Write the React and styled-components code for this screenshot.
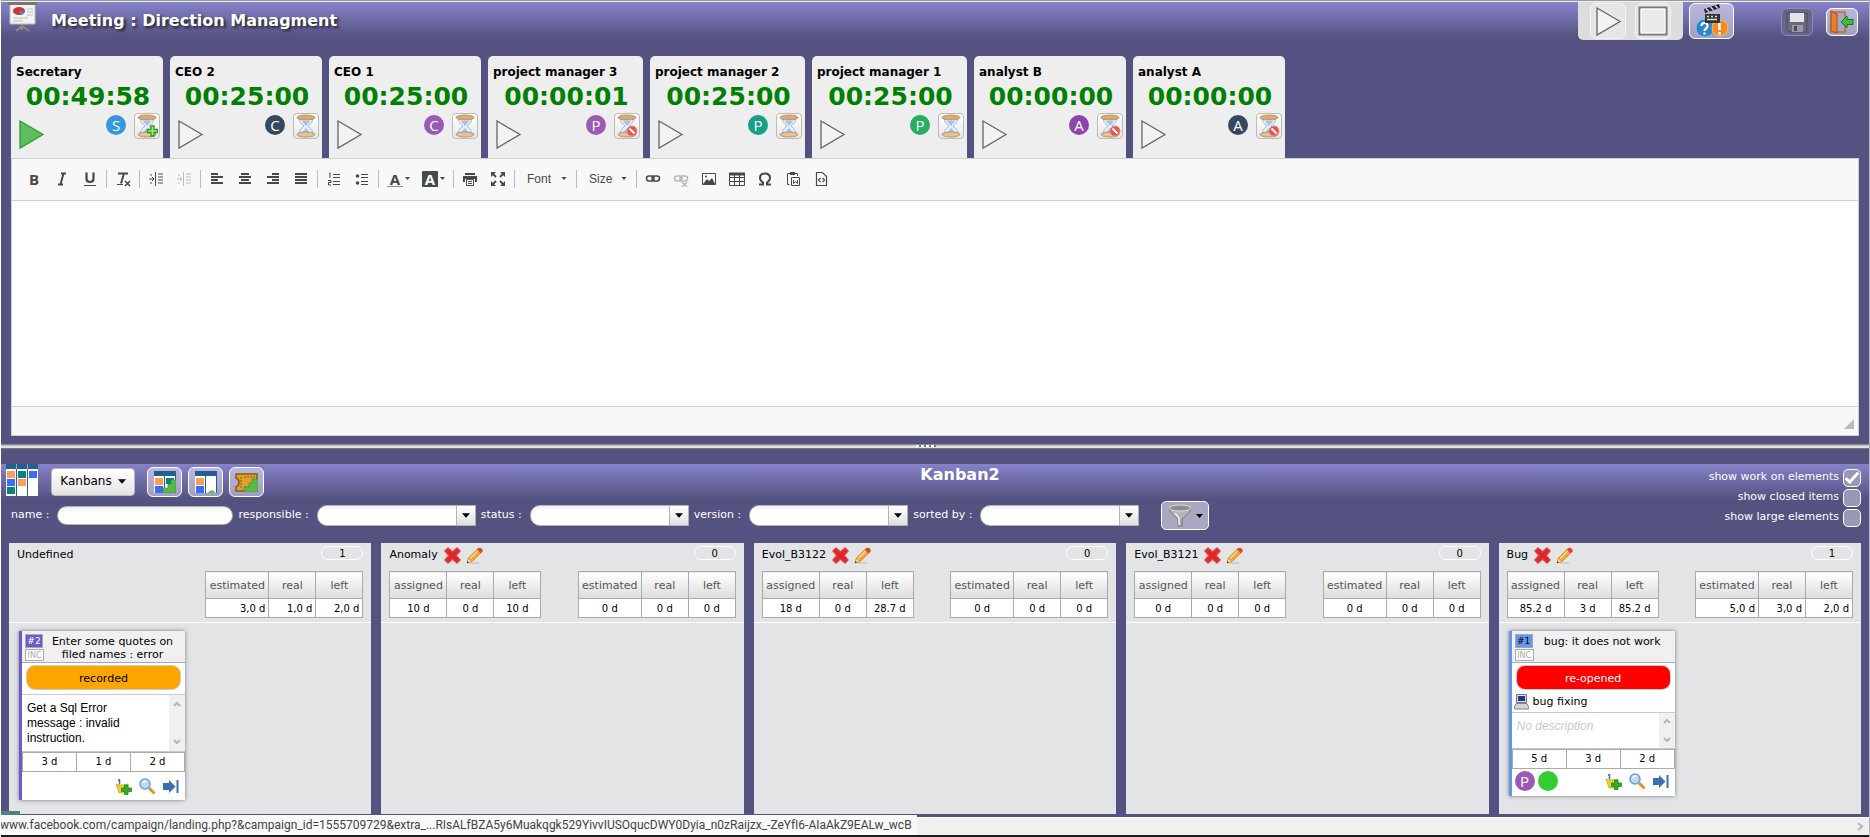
import React from "react";
import styled, { createGlobalStyle } from "styled-components";

const Global = createGlobalStyle`
  *, *::before, *::after { box-sizing: border-box; }
  body { margin: 0; background: #54517f; font: 11px/14px "DejaVu Sans", Verdana, sans-serif; color: #000; }
  button, input, select, textarea { font: inherit; color: inherit; margin: 0; padding: 0; }
  button { cursor: pointer; }
  svg { display: block; flex: none; }
`;

const Page = styled.div`
  position: relative;
  display: flex;
  flex-direction: column;
  min-height: 100vh;
  background: #545280;
  border-left: 1px solid #fff;
  border-right: 1px solid #b5b5bd;
  overflow: hidden;
`;

/* ---------- meeting header ---------- */
const MeetingPanel = styled.section`
  border-top: 1px solid #9a9a9a;
  box-shadow: inset 0 1px #f0f0f0;
  padding: 1px 10px 8px;
`;
const MeetingHeader = styled.header`
  display: flex;
  align-items: flex-start;
  height: 54px;
  margin: 0 -10px;
  padding: 0 11px 0 7px;
  background: linear-gradient(#8682ca, #545280 36px);
`;
const MeetingTitle = styled.h1`
  margin: 9px auto 0 14px;
  font-size: 16px;
  line-height: 20px;
  color: #fff;
  text-shadow: 2px 2px 3px #222;
`;
const PlayGroup = styled.div`
  display: flex;
  gap: 9px;
  width: 105px;
  height: 38px;
  padding: 1px 12px;
  margin-right: 6px;
  background: #ddd;
  border-radius: 0 0 5px 5px;
`;
const MediaButton = styled.button`
  display: grid;
  place-items: center;
  width: 36px;
  height: 36px;
  border: 1px solid #f2f2f2;
  border-radius: 6px;
  background: #e6e6e6;
`;
const HeaderButton = styled.button`
  display: grid;
  place-items: center;
  width: ${(p) => p.$w}px;
  height: ${(p) => p.$h}px;
  margin: ${(p) => p.$margin || "0"};
  border: 1px solid ${(p) => (p.$dim ? "#908eae" : "#fff")};
  border-radius: 6px;
  background: ${(p) => (p.$dim ? "#67658e" : "linear-gradient(#bbb8e0, #a19fc0)")};
`;

/* ---------- attendees ---------- */
const Attendees = styled.div`
  display: flex;
  gap: 7px;
`;
const Attendee = styled.article`
  width: ${(p) => (p.$wide ? 155 : 152)}px;
  height: 102px;
  padding: 8px 3px 0 5px;
  background: #eee;
  border-radius: 5px 5px 0 0;
`;
const AttendeeName = styled.h2`
  margin: 0;
  font-size: 12px;
  line-height: 16px;
  white-space: nowrap;
`;
const Clock = styled.div`
  padding-top: 1px;
  font-size: 25px;
  line-height: 32px;
  font-weight: bold;
  text-align: center;
  color: #008000;
`;
const AttendeeTools = styled.div`
  display: flex;
  align-items: flex-start;
  gap: 8px;
  padding-left: 2px;
`;
const PlainButton = styled.button`
  display: block;
  border: 0;
  background: none;
  margin: ${(p) => p.$margin || "0"};
`;
const Avatar = styled.span`
  display: grid;
  place-items: center;
  width: 20px;
  height: 20px;
  margin-top: 2px;
  border-radius: 50%;
  background: ${(p) => p.$color};
  color: #fff;
  font: 15px/20px "Open Sans", sans-serif;
`;
const HourglassButton = styled.button`
  display: grid;
  place-items: center;
  width: 26px;
  height: 26px;
  border: 1px solid #bbb;
  border-radius: 4px;
  background: linear-gradient(#fff, #e8e8e8);
`;

/* ---------- editor ---------- */
const Editor = styled.div`
  border: 1px solid #d1d1d1;
  background: #f8f8f8;
`;
const EditorToolbar = styled.div`
  display: flex;
  align-items: center;
  height: 42px;
  padding: 0 8px 2px;
  border-bottom: 1px solid #d1d1d1;
  color: #484848;
`;
const ToolButton = styled.button`
  display: flex;
  align-items: center;
  gap: 2px;
  height: 28px;
  padding: 0 6px;
  border: 0;
  background: none;
  opacity: ${(p) => (p.disabled ? 0.35 : 1)};
`;
const ToolGlyph = styled.span`
  width: 16px;
  height: 16px;
  border-bottom: ${(p) => (p.$bar ? "1px solid #888" : "0")};
  border-radius: ${(p) => (p.$filled ? 1 : 0)}px;
  background: ${(p) => (p.$filled ? "#484848" : "none")};
  color: ${(p) => (p.$filled ? "#fff" : "inherit")};
  font: bold 15px/16px "Open Sans", sans-serif;
  text-align: center;
`;
const ToolSeparator = styled.span`
  width: 1px;
  height: 18px;
  margin: 0 2px;
  background: #bcbcbc;
`;
const ToolCombo = styled.button`
  display: flex;
  align-items: center;
  justify-content: space-between;
  width: ${(p) => p.$w}px;
  height: 28px;
  padding: 0 7px 0 10px;
  border: 0;
  background: none;
  font: 12px/16px "Liberation Sans", Arial, sans-serif;
`;
const EditorText = styled.textarea`
  display: block;
  width: 100%;
  height: 205px;
  border: 0;
  outline: 0;
  padding: 20px;
  resize: none;
  background: #fff;
`;
const EditorFooter = styled.div`
  display: flex;
  align-items: flex-end;
  justify-content: flex-end;
  height: 29px;
  padding: 0 4px 6px;
  border-top: 1px solid #d1d1d1;
`;

const Splitter = styled.div`
  display: flex;
  justify-content: center;
  align-items: flex-start;
  height: 5px;
  padding: 1px 18px 0 0;
  background: linear-gradient(#8e8e8e 0 1px, #bbb 1px 2px, #e2e2e2 2px 4px, #777 4px);
`;
const Grip = styled.span`
  width: 20px;
  height: 2px;
  background: repeating-linear-gradient(90deg, #fff 0 3px, #777 3px 5px);
`;

/* ---------- kanban header ---------- */
const Kanban = styled.section`
  flex: 1;
  display: flex;
  flex-direction: column;
  padding-top: 15px;
`;
const KanbanHeader = styled.header`
  display: grid;
  grid-template-columns: 50px 1fr;
  grid-template-rows: 35px 44px;
  background: linear-gradient(#8682ca, #545280 35px);
`;
const KanbanIcon = styled.div`
  padding-left: 5px;
`;
const KanbanTools = styled.div`
  grid-area: 1 / 2;
  display: flex;
  align-items: flex-start;
  padding-top: 3px;
  gap: 6px;
`;
const KanbanMenu = styled.button`
  display: flex;
  align-items: center;
  justify-content: center;
  gap: 6px;
  width: 84px;
  height: 28px;
  margin: 1px 6px 0 0;
  padding-bottom: 2px;
  border: 1px solid #bbb;
  border-radius: 4px;
  background: linear-gradient(#fff, #e3e3e3);
  font-size: 12px;
`;
const KanbanTitle = styled.h2`
  grid-area: 1 / 2;
  justify-self: center;
  margin: 0;
  font-size: 16px;
  line-height: 22px;
  color: #fff;
`;
const Options = styled.div`
  grid-area: 1 / 2 / 3 / 3;
  justify-self: end;
  display: flex;
  flex-direction: column;
  align-items: flex-end;
  gap: 2px;
  padding: 5px 8px 0 0;
  color: #fff;
`;
const Option = styled.label`
  display: flex;
  gap: 4px;
  line-height: 16px;
`;
const Check = styled.input`
  appearance: none;
  width: 18px;
  height: 18px;
  border: 1px solid #fff;
  border-radius: 5px;
  background: #9997b6;
  display: grid;
  place-items: center;
  &:checked::before {
    content: "";
    width: 14px;
    height: 7px;
    border: solid #fff;
    border-width: 0 0 3px 3px;
    transform: translateY(-2px) rotate(-48deg);
  }
`;
const Filters = styled.form`
  grid-area: 2 / 1 / 3 / 3;
  display: flex;
  align-items: flex-start;
  gap: 5px;
  padding: 2px 10px 0;
  color: #fff;
`;
const Field = styled.label`
  display: flex;
  gap: 8px;
  padding-top: 4px;
  line-height: 20px;
  white-space: nowrap;
`;
const NameInput = styled.input`
  width: 176px;
  height: 19px;
  margin-top: 1px;
  padding: 0 8px;
  border: 1px solid #b3b3b3;
  border-radius: 10px;
  background: linear-gradient(#f0f0f0, #fff 6px);
  color: #000;
`;
const ComboBox = styled.span`
  position: relative;
  display: block;
  width: 159px;
  height: 21px;
`;
const ComboSelect = styled.select`
  appearance: none;
  width: 100%;
  height: 100%;
  padding: 0 24px 0 10px;
  border: 1px solid #b3b3b3;
  border-radius: 10px 0 0 10px;
  background: linear-gradient(#f0f0f0, #fff 6px);
  color: #000;
`;
const ComboArrow = styled.span`
  position: absolute;
  top: 1px;
  right: 1px;
  bottom: 1px;
  display: grid;
  place-items: center;
  width: 19px;
  border-left: 1px solid #b3b3b3;
  background: linear-gradient(#fff, #e0e0e0);
  color: #000;
  pointer-events: none;
`;
const FilterButton = styled.button`
  display: flex;
  align-items: center;
  justify-content: center;
  gap: 4px;
  width: 48px;
  height: 29px;
  margin-left: 17px;
  border: 1px solid #fff;
  border-radius: 5px;
  background: #a9a7c2;
  color: #000;
`;

/* ---------- board ---------- */
const Board = styled.div`
  flex: 1;
  display: grid;
  grid-template-columns: repeat(5, 1fr);
  gap: 10px;
  padding: 0 8px 3px;
`;
const Column = styled.section`
  background: #e3e4e6;
`;
const ColumnHead = styled.header`
  height: 80px;
  padding: 3px 8px 0;
  border-bottom: 1px solid #fff;
`;
const ColumnTitleRow = styled.div`
  display: flex;
  align-items: flex-start;
  height: 25px;
`;
const ColumnTitle = styled.h3`
  margin: 0 6px 0 0;
  font-size: 11px;
  line-height: 18px;
  font-weight: normal;
`;
const Count = styled.span`
  width: 42px;
  height: 14px;
  margin-left: auto;
  border: 1px solid #fff;
  border-radius: 8px;
  font-size: 10px;
  line-height: 13px;
  text-align: center;
`;
const Tables = styled.div`
  display: flex;
  justify-content: ${(p) => (p.$single ? "flex-end" : "space-between")};
`;
const LoadTable = styled.table`
  border-collapse: collapse;
  table-layout: fixed;
  width: ${(p) => p.$first + 95}px;
  th, td { border: 1px solid #aaa; width: 47px; padding: 0; }
  th:first-child { width: ${(p) => p.$first}px; }
  th {
    height: 27px;
    padding-top: 2px;
    font-weight: normal;
    color: #555;
    background: linear-gradient(#fff, #dcdcdc);
  }
  td {
    height: 19px;
    padding: 1px ${(p) => (p.$right ? 3 : 0)}px 0 0;
    background: #fff;
    font-size: 10px;
    line-height: 14px;
    text-align: ${(p) => (p.$right ? "right" : "center")};
  }
`;

/* ---------- card ---------- */
const Card = styled.article`
  width: 166px;
  margin: 8px 0 0 10px;
  background: #fff;
  border-left: 3px solid ${(p) => p.$color};
  box-shadow: 0 0 4px #777;
`;
const CardHead = styled.header`
  display: flex;
  gap: 2px;
  height: 32px;
  padding: 3px 6px 0 3px;
  background: #f0f0f0;
  border-bottom: 1px solid #aaa;
`;
const Tags = styled.div`
  display: flex;
  flex-direction: column;
  align-items: flex-start;
  gap: 1px;
`;
const IdTag = styled.span`
  width: 18px;
  height: 14px;
  border: 1px solid #aaa;
  background: ${(p) => p.$color};
  color: ${(p) => p.$text};
  font-size: 9px;
  line-height: 13px;
  text-align: center;
`;
const TypeTag = styled.span`
  width: 19px;
  height: 12px;
  border: 1px solid #aaa;
  background: #fff;
  color: #aaa;
  font-size: 8px;
  line-height: 11px;
  text-align: center;
`;
const CardTitle = styled.h4`
  flex: 1;
  margin: 0;
  padding-top: 1px;
  font-size: 11px;
  line-height: 13px;
  font-weight: normal;
  text-align: center;
`;
const Status = styled.div`
  height: 25px;
  margin: 2px 4px 4px;
  border: 1px solid #ccc;
  border-radius: 9px;
  background: ${(p) => p.$bg};
  color: ${(p) => p.$fg};
  line-height: 25px;
  text-align: center;
`;
const Activity = styled.div`
  display: flex;
  gap: 4px;
  padding: 0 2px;
  height: 18px;
  line-height: 15px;
`;
const Description = styled.div`
  display: flex;
  justify-content: space-between;
  height: ${(p) => p.$h}px;
  border: solid #c8c6d8;
  border-width: 1px 0;
  font: 12px/15px "Liberation Sans", Arial, sans-serif;
`;
const DescriptionText = styled.p`
  margin: 0;
  padding: 6px 16px 0 5px;
  color: ${(p) => (p.$empty ? "#c8c8d4" : "#000")};
  font-style: ${(p) => (p.$empty ? "italic" : "normal")};
`;
const ScrollTrack = styled.span`
  flex: none;
  display: flex;
  flex-direction: column;
  justify-content: space-between;
  align-items: center;
  width: 16px;
  padding: ${(p) => p.$pad}px 0;
  background: #f0f0f0;
`;
const WorkTable = styled.table`
  width: 100%;
  table-layout: fixed;
  border-collapse: collapse;
  td { height: 19px; padding: 0; border: 1px solid #aaa; font-size: 10px; line-height: 14px; text-align: center; }
`;
const CardFoot = styled.footer`
  display: flex;
  align-items: flex-start;
  gap: 3px;
  height: ${(p) => (p.$people ? 27 : 28)}px;
  padding: ${(p) => (p.$people ? 0 : 5)}px 6px 0 3px;
`;
const CardActions = styled.div`
  display: flex;
  gap: 7px;
  margin: ${(p) => (p.$people ? 4 : 1)}px 0 0 auto;
`;

/* ---------- browser bottom ---------- */
const HorizontalScroll = styled.div`
  display: flex;
  align-items: center;
  justify-content: flex-end;
  height: 20px;
  padding: 0 5px;
  background: #f0f0f0;
  border-top: 1px solid #fff;
  border-bottom: 2px solid #1c1c1c;
`;
const LinkPreview = styled.div`
  position: absolute;
  left: -1px;
  bottom: 2px;
  padding-right: 5px;
  height: 20px;
  background: #f9f9f9;
  color: #444;
  font: 12px/21px Roboto, "Open Sans", sans-serif;
  white-space: nowrap;
`;
const LoadMark = styled.span`
  position: absolute;
  left: -1px;
  bottom: 22px;
  width: 20px;
  height: 4px;
  background: #4f8088;
`;

/* ---------- drawings ---------- */
const Caret = ({ w = 7, h = 4 }) => (
  <svg width={w} height={h} viewBox="0 0 7 4"><path d="M0 0h7L3.500 4z" fill="currentColor" /></svg>
);
const PlayIcon = ({ on }) => (
  <svg width="27" height="31" viewBox="0 0 27 31">
    <path d="M2 2L25 15.500 2 29z" fill={on ? "#5cbf5c" : "#f3f3f1"} stroke={on ? "#2f9a35" : "#666"} strokeWidth="1.300" />
  </svg>
);
const StopIcon = () => (
  <svg width="30" height="30" viewBox="0 0 30 30">
    <path d="M1.500 1.500h27v27h-27z" fill="#e9ebe8" stroke="#777a76" strokeWidth="2" />
    <path d="M3 3h24v24H3z" fill="none" stroke="#fff" />
  </svg>
);
const BoardStandIcon = () => (
  <svg width="29" height="31" viewBox="0 0 29 31">
    <path d="M14 21v3l-6 5M14 24l7 5M14 24v4" stroke="#8b8b78" strokeWidth="2" fill="none" />
    <path d="M2 2h25v20H2z" fill="#f4f4f4" stroke="#bbb" />
    <rect width="29" height="3" rx="1" fill="#77776b" />
    <ellipse cx="11" cy="9" rx="6" ry="4" fill="#d8302c" />
    <path d="M11 9h6q-1 4-5 4z" fill="#5480c0" />
    <path d="M19 7h6M19 10h6M19 13h6M5 16h15M5 19h10" stroke="#bbb" />
  </svg>
);
const ClapIcon = () => (
  <svg width="34" height="34" viewBox="0 0 34 34">
    <circle cx="10" cy="24" r="9" fill="#2c86c9" stroke="#7fb9e6" />
    <circle cx="25" cy="24" r="8" fill="#f58a1f" stroke="#fbb871" />
    <path d="M6.500 22q0-3 3-3t3 3q0 1.500-1.500 2.500T9.500 27M9.500 28.500v2" fill="none" stroke="#fff" strokeWidth="2.200" />
    <path d="M24.500 19v7M24.500 28v2.400" stroke="#fff" strokeWidth="2.600" />
    <path d="M10 10h15v9H10z" fill="#333" />
    <path d="M9 5L24 0l1 4L10 9z" fill="#222" />
    <path d="M11 4.500l3 3M15.500 3l3 3M20 1.500l3 3M12 12.500h2M16 12.500h2M20 12.500h2M12 15.500h10" stroke="#ddd" strokeWidth="1.400" />
  </svg>
);
const SaveIcon = () => (
  <svg width="22" height="21" viewBox="0 0 22 21">
    <path d="M1 1h20v19H3l-2-2z" fill="#6a6a78" stroke="#4a4a5e" />
    <path d="M4 1h14v9H4z" fill="#e3e3e8" />
    <path d="M6 13h11v7H6z" fill="#9a9aa6" />
    <path d="M8 14h3v5H8z" fill="#4c4c5c" />
  </svg>
);
const ExitIcon = () => (
  <svg width="24" height="24" viewBox="0 0 24 24">
    <path d="M1 2h14v20H1z" fill="#a5a9c8" stroke="#d06a1c" strokeWidth="1.500" />
    <path d="M1 1l6 3v19l-6-2z" fill="#e58030" stroke="#a4521a" />
    <path d="M11 12l6-6v3.500h6v5h-6V18z" fill="#45bb45" stroke="#137a1a" />
  </svg>
);
const Hourglass = ({ mark }) => (
  <svg width="22" height="24" viewBox="0 0 22 24">
    <path d="M4 4q0 5 5 8-5 3-5 8h14q0-5-5-8 5-3 5-8z" fill="#e4eefb" stroke="#a9bcd8" />
    <path d="M7 7h8l-4 5zM11 14l5 6H6z" fill="#9fc3ee" />
    <ellipse cx="11" cy="3.500" rx="9" ry="2.500" fill="#d9ac73" stroke="#a67d48" strokeWidth=".7" />
    <ellipse cx="11" cy="20.500" rx="9" ry="2.500" fill="#e6c292" stroke="#a67d48" strokeWidth=".7" />
    {mark === "plus" && <path d="M15 12h3v3.500h3.500v3H18V22h-3v-3.500h-3.500v-3H15z" fill="#a5ee7c" stroke="#2c9a22" strokeWidth="1.300" />}
    {mark === "stop" && (
      <g stroke="#fff">
        <circle cx="16" cy="17" r="5" fill="#e0574f" stroke="#e88a84" />
        <path d="M13.500 14.500l5 5" strokeWidth="2" />
      </g>
    )}
  </svg>
);

const TOOL_PATHS = {
  indent: "M1 8h5M4 6l2 2-2 2M7.500 1v14M10 3h5M10 6h5M10 9h5M10 12h5M2 4h2M2 12h2",
  left: "M2 3h7M2 6h12M2 9h7M2 12h12",
  center: "M4 3h8M2 6h12M4 9h8M2 12h12",
  right: "M7 3h7M2 6h12M7 9h7M2 12h12",
  justify: "M2 3h12M2 6h12M2 9h12M2 12h12",
};
const ToolSvg = ({ children }) => (
  <svg width="16" height="16" viewBox="0 0 16 16" fill="none" stroke="currentColor">{children}</svg>
);
const ToolIcon = ({ name }) => {
  switch (name) {
    case "bold": return <ToolGlyph>B</ToolGlyph>;
    case "italic": return <ToolSvg><path d="M7 2.500h5M4 13.500h5M9.500 2.500l-3 11" strokeWidth="2" /></ToolSvg>;
    case "underline": return <ToolSvg><path d="M4.500 1.500v6q0 3.500 3.500 3.500t3.500-3.500v-6" strokeWidth="2.200" /><path d="M2 14.500h12" /></ToolSvg>;
    case "clear": return <ToolSvg><path d="M3 2.500h10M9 2.500l-3 10" strokeWidth="2" /><path d="M2 13.500h6" /><path d="M10 10l5 5M15 10l-5 5" strokeWidth="1.500" /></ToolSvg>;
    case "indent":
    case "outdent": return <ToolSvg><path d={TOOL_PATHS.indent} /></ToolSvg>;
    case "left":
    case "center":
    case "right":
    case "justify": return <ToolSvg><path d={TOOL_PATHS[name]} strokeWidth="2" /></ToolSvg>;
    case "numbers": return <ToolSvg><path d="M7 3.500h7M7 6.500h7M7 10.500h7M7 13.500h7M3 2h1v5M2 9.500h3v2H2.500v2.500H5" /></ToolSvg>;
    case "bullets": return <ToolSvg><circle cx="3.500" cy="5" r="1.800" fill="currentColor" stroke="none" /><circle cx="3.500" cy="12" r="1.800" fill="currentColor" stroke="none" /><path d="M7 3.500h7M7 6.500h7M7 10.500h7M7 13.500h7" /></ToolSvg>;
    case "color": return <ToolGlyph $bar>A</ToolGlyph>;
    case "back": return <ToolGlyph $filled>A</ToolGlyph>;
    case "print": return <ToolSvg><path d="M3 3h10" strokeWidth="2" /><path d="M1 5h14v6h-2V8H3v3H1z" fill="currentColor" stroke="none" /><path d="M4.500 8.500h7v6h-7zM6 10.500h4M6 12.500h4" /></ToolSvg>;
    case "max": return <ToolSvg><path d="M2 2l4 4M14 2l-4 4M2 14l4-4M14 14l-4-4" strokeWidth="1.800" /><path d="M1 1h5L1 6zM15 1v5l-5-5zM1 15v-5l5 5zM15 15h-5l5-5z" fill="currentColor" stroke="none" /></ToolSvg>;
    case "link":
    case "unlink": return <ToolSvg><rect x="1.500" y="5" width="7.500" height="5" rx="2.500" strokeWidth="1.500" /><rect x="7" y="5" width="7.500" height="5" rx="2.500" strokeWidth="1.500" />{name === "unlink" && <path d="M9 11l5 5M14 11l-5 5" strokeWidth="1.500" />}</ToolSvg>;
    case "image": return <ToolSvg><path d="M1.500 2.500h13v11h-13z" /><path d="M2 13l4-5 2 2 3-3 3 6z" fill="currentColor" stroke="none" /><circle cx="5" cy="5.500" r="1" fill="currentColor" stroke="none" /></ToolSvg>;
    case "table": return <ToolSvg><path d="M.5 2.500h15v12H.5zM.5 6.500h15M.5 10.500h15M5.500 4v10M10.500 4v10" /><path d="M0 3h16" strokeWidth="3" /></ToolSvg>;
    case "omega": return <ToolSvg><path d="M2 13.500h4v-2Q3 9.500 3 7q0-4.500 5-4.500T13 7q0 2.500-3 4.500v2h4" strokeWidth="2" /></ToolSvg>;
    case "paste": return <ToolSvg><path d="M4.500 13.500H2.500v-11H5M10 2.500h2.500V5" /><path d="M5 1h5v3H5z" fill="currentColor" stroke="none" /><path d="M6.500 6.500h8v8h-8zM8.500 9v3.500l2-2 2 2V9" /></ToolSvg>;
    default: return <ToolSvg><path d="M3.500 1.500h6l4 4v9h-10zM7.500 7L5.500 9l2 2M9.500 7l2 2-2 2" strokeWidth="1.200" /></ToolSvg>;
  }
};

const KanbanGlyph = () => (
  <svg width="32" height="32" viewBox="0 0 32 32">
    <path d="M0 0h32v32H0z" fill="#fff" />
    <path d="M0 0h32v5H0z" fill="#235f8f" />
    <path d="M10.500 0v32M21.500 0v32" stroke="#235f8f" />
    <path d="M10.500 0v5M21.500 0v5" stroke="#aaa" />
    <path d="M1 7h8v7H1zM12 15h8v7h-8z" fill="#fb9c58" />
    <path d="M1 15h8v7H1zM23 7h8v7h-8z" fill="#3a6cf8" />
    <path d="M12 7h8v7h-8zM1 23h8v7H1z" fill="#0b807c" />
  </svg>
);
const AddKanbanIcon = ({ column }) => (
  <svg width="22" height="22" viewBox="0 0 22 22">
    <path d="M0 0h22v22H0z" fill="#fff" />
    <path d="M0 0h22v5H0z" fill="#235f8f" />
    <path d="M10.500 0v22M21.500 5v17" stroke="#235f8f" />
    <path d="M1 7h8v7H1z" fill="#fb9c58" />
    <path d="M1 15h8v7H1z" fill="#3a6cf8" />
    {column ? (
      <path d="M12 22l3-2 2-1 2 1 1 2z" fill="#5cc04c" />
    ) : (
      <>
        <path d="M12 7h8v6h-8z" fill="#0b807c" />
        <path d="M9 22v-5h5v-4h3V9h5v13z" fill="#5cb84a" stroke="#3a9636" strokeWidth=".7" />
      </>
    )}
  </svg>
);
const TicketIcon = () => (
  <svg width="23" height="20" viewBox="0 0 23 20">
    <path d="M1 2h21v17H1v-4q3-1 3-4.500T1 6z" fill="#e0a12c" stroke="#8a5a12" strokeWidth="1.500" />
    <path d="M6 5v11M9 5h11M9 15h5" stroke="#8a5a12" strokeDasharray="2 1" />
    <path d="M9 20v-5h5v-4h3V7h6v13z" fill="#5cb84a" stroke="#3a9636" strokeWidth=".7" />
  </svg>
);
const FunnelIcon = () => (
  <svg width="24" height="24" viewBox="0 0 24 24">
    <path d="M1 4q0 4 9 11v7h4v-7q9-7 9-11z" fill="#b5b5b5" stroke="#777" />
    <ellipse cx="12" cy="4" rx="11" ry="3" fill="#8e8e8e" stroke="#ddd" />
    <path d="M7 9l4 5v7" stroke="#eee" fill="none" strokeWidth="1.500" />
  </svg>
);
const CrossIcon = () => (
  <svg width="17" height="17" viewBox="0 0 17 17">
    <path d="M4 1l4.500 4L13 1l3 3-4 4.500L16 13l-3 3-4.500-4L4 16l-3-3 4-4.500L1 4z" fill="#e0242a" stroke="#e0403c" strokeWidth="1.500" strokeLinejoin="round" />
  </svg>
);
const PencilIcon = () => (
  <svg width="17" height="17" viewBox="0 0 17 17">
    <path d="M4 16h9" stroke="#bbb" />
    <path d="M1 16l1.500-5L12 1.500 15.500 5 6 14.500z" fill="#f9a73a" stroke="#d17c1c" />
    <path d="M4 11.500l8.500-8.500" stroke="#ffe08a" strokeWidth="1.500" />
    <path d="M11 2.500l1.500-1.500q2-.8 3.500 1t0 3l-1.500 1.500z" fill="#e04428" />
    <path d="M1 16l1.300-4 2.700 2.700z" fill="#f2dcae" />
    <path d="M1 16l.6-2 1.400 1.400z" fill="#222" />
  </svg>
);
const FolderAddIcon = () => (
  <svg width="16" height="16" viewBox="0 0 16 16">
    <path d="M2 1.500l1.500-1v5" fill="none" stroke="#2f78b8" strokeWidth="1.500" />
    <path d="M0 5l3 1 3 0 6-1v9H3z" fill="#f0cf2c" stroke="#c7a31a" strokeWidth=".7" />
    <path d="M8.500 6h3.500v3h3.500v3.500H12v3H8.500v-3H5.500V9h3z" fill="#32a82c" stroke="#1d7e1c" strokeWidth=".7" />
  </svg>
);
const MagnifierIcon = () => (
  <svg width="17" height="17" viewBox="0 0 17 17">
    <path d="M10 10l5.500 5.500" stroke="#dc9136" strokeWidth="3" />
    <circle cx="6" cy="6" r="5" fill="#b9dbf7" stroke="#6b9bd0" strokeWidth="1.500" />
    <path d="M3.500 5q1-2 4-2" stroke="#fff" fill="none" strokeWidth="1.500" />
  </svg>
);
const MoveIcon = () => (
  <svg width="16" height="17" viewBox="0 0 16 17">
    <path d="M0 5h6V2l6.500 6.500L6 15v-3H0zM13.500 2H15.500v13h-2z" fill="#3b6fad" />
  </svg>
);
const ComputerIcon = () => (
  <svg width="15" height="16" viewBox="0 0 15 16">
    <path d="M2.500.5h10v8h-10z" fill="#ddd" stroke="#777" />
    <path d="M4 2h7v5H4z" fill="#26348c" />
    <path d="M2 9.500h11l1.500 3v2.500H.5v-2.500z" fill="#d5d5d5" stroke="#888" />
  </svg>
);
const Chevron = ({ d }) => (
  <svg width="8" height="6" viewBox="0 0 8 6"><path d={d} fill="none" stroke="#b5b5b5" strokeWidth="2" /></svg>
);

/* ---------- data ---------- */
const attendees = [
  { name: "Secretary", time: "00:49:58", letter: "S", color: "#3498db", mark: "plus", on: true },
  { name: "CEO 2", time: "00:25:00", letter: "C", color: "#34495e" },
  { name: "CEO 1", time: "00:25:00", letter: "C", color: "#9b59b6" },
  { name: "project manager 3", time: "00:00:01", letter: "P", color: "#9b59b6", mark: "stop", wide: true },
  { name: "project manager 2", time: "00:25:00", letter: "P", color: "#16a085", wide: true },
  { name: "project manager 1", time: "00:25:00", letter: "P", color: "#27ae60", wide: true },
  { name: "analyst B", time: "00:00:00", letter: "A", color: "#8e44ad", mark: "stop" },
  { name: "analyst A", time: "00:00:00", letter: "A", color: "#34495e", mark: "stop" },
];
const toolGroups = [
  ["bold", "italic", "underline"],
  ["clear"],
  ["indent", "outdent"],
  ["left", "center", "right", "justify"],
  ["numbers", "bullets"],
  ["color", "back"],
  ["print", "max"],
  ["Font"],
  ["Size"],
  ["link", "unlink", "image", "table", "omega", "paste", "source"],
];
const zero = ["0 d", "0 d", "0 d"];
const columns = [
  {
    name: "Undefined", count: 1, estimated: ["3,0 d", "1,0 d", "2,0 d"], right: true,
    card: {
      id: "#2", color: "#6a5acd", idText: "#fff", title: "Enter some quotes on filed names : error", status: "recorded",
      bg: "#ffa500", fg: "#000", text: "Get a Sql Error message : invalid instruction.", h: 58, work: ["3 d", "1 d", "2 d"],
    },
  },
  { name: "Anomaly", count: 0, assigned: ["10 d", "0 d", "10 d"], estimated: zero },
  { name: "Evol_B3122", count: 0, assigned: ["18 d", "0 d", "28.7 d"], estimated: zero },
  { name: "Evol_B3121", count: 0, assigned: zero, estimated: zero },
  {
    name: "Bug", count: 1, assigned: ["85.2 d", "3 d", "85.2 d"], estimated: ["5,0 d", "3,0 d", "2,0 d"], right: true,
    card: {
      id: "#1", color: "#6495ed", idText: "#000", title: "bug: it does not work", status: "re-opened",
      bg: "#f00", fg: "#fff", activity: "bug fixing", h: 37, work: ["5 d", "3 d", "2 d"], people: true,
    },
  },
];

const Load = ({ label, values, right }) => (
  <LoadTable $first={label === "assigned" ? 57 : 63} $right={right}>
    <thead><tr><th>{label}</th><th>real</th><th>left</th></tr></thead>
    <tbody><tr>{values.map((v, i) => <td key={i}>{v}</td>)}</tr></tbody>
  </LoadTable>
);

const KanbanCard = ({ card }) => (
  <Card $color={card.color}>
    <CardHead>
      <Tags>
        <IdTag $color={card.color} $text={card.idText}>{card.id}</IdTag>
        <TypeTag>INC</TypeTag>
      </Tags>
      <CardTitle>{card.title}</CardTitle>
    </CardHead>
    <Status $bg={card.bg} $fg={card.fg}>{card.status}</Status>
    {card.activity && <Activity><ComputerIcon />{card.activity}</Activity>}
    <Description $h={card.h}>
      <DescriptionText $empty={!card.text}>{card.text || "No description"}</DescriptionText>
      <ScrollTrack $pad={card.text ? 6 : 5}>
        <Chevron d="M1 5l3-3 3 3" />
        <Chevron d="M1 1l3 3 3-3" />
      </ScrollTrack>
    </Description>
    <WorkTable><tbody><tr>{card.work.map((w) => <td key={w}>{w}</td>)}</tr></tbody></WorkTable>
    <CardFoot $people={card.people}>
      {card.people && <><Avatar $color="#9b59b6">P</Avatar><Avatar $color="#32cd32" /></>}
      <CardActions $people={card.people}>
        <PlainButton aria-label="Add attachment"><FolderAddIcon /></PlainButton>
        <PlainButton aria-label="View"><MagnifierIcon /></PlainButton>
        <PlainButton aria-label="Go to item"><MoveIcon /></PlainButton>
      </CardActions>
    </CardFoot>
  </Card>
);

const Combo = ({ label }) => (
  <Field>
    {label} :
    <ComboBox>
      <ComboSelect defaultValue=""><option value="" /></ComboSelect>
      <ComboArrow><Caret w={8} h={5} /></ComboArrow>
    </ComboBox>
  </Field>
);

export default function App() {
  return (
    <Page>
      <Global />
      <MeetingPanel>
        <MeetingHeader>
          <BoardStandIcon />
          <MeetingTitle>Meeting : Direction Managment</MeetingTitle>
          <PlayGroup>
            <MediaButton aria-label="Start"><PlayIcon /></MediaButton>
            <MediaButton aria-label="Stop"><StopIcon /></MediaButton>
          </PlayGroup>
          <HeaderButton $w={45} $h={36} $margin="1px 47px 0 0" aria-label="Questions"><ClapIcon /></HeaderButton>
          <HeaderButton $w={32} $h={28} $margin="6px 13px 0 0" $dim aria-label="Save"><SaveIcon /></HeaderButton>
          <HeaderButton $w={32} $h={28} $margin="6px 0 0" aria-label="Exit"><ExitIcon /></HeaderButton>
        </MeetingHeader>
        <Attendees>
          {attendees.map((a) => (
            <Attendee key={a.name} $wide={a.wide}>
              <AttendeeName>{a.name}</AttendeeName>
              <Clock>{a.time}</Clock>
              <AttendeeTools>
                <PlainButton $margin="6px auto 0 0" aria-label={"Speak " + a.name}><PlayIcon on={a.on} /></PlainButton>
                <Avatar $color={a.color}>{a.letter}</Avatar>
                <HourglassButton aria-label="Time"><Hourglass mark={a.mark} /></HourglassButton>
              </AttendeeTools>
            </Attendee>
          ))}
        </Attendees>
        <Editor>
          <EditorToolbar>
            {toolGroups.map((group, i) => (
              <React.Fragment key={i}>
                {i > 0 && <ToolSeparator />}
                {group.map((t) =>
                  t === "Font" || t === "Size" ? (
                    <ToolCombo key={t} $w={t === "Font" ? 57 : 55}>{t}<Caret w={6} h={3} /></ToolCombo>
                  ) : (
                    <ToolButton key={t} aria-label={t} disabled={t === "outdent" || t === "unlink"}>
                      <ToolIcon name={t} />
                      {(t === "color" || t === "back") && <Caret w={5} h={3} />}
                    </ToolButton>
                  )
                )}
              </React.Fragment>
            ))}
          </EditorToolbar>
          <EditorText aria-label="Minutes" />
          <EditorFooter>
            <svg width="10" height="10" viewBox="0 0 10 10"><path d="M10 0v10H0z" fill="#bbb" /></svg>
          </EditorFooter>
        </Editor>
      </MeetingPanel>
      <Splitter><Grip /></Splitter>
      <Kanban>
        <KanbanHeader>
          <KanbanIcon><KanbanGlyph /></KanbanIcon>
          <KanbanTitle>Kanban2</KanbanTitle>
          <KanbanTools>
            <KanbanMenu>Kanbans <Caret w={8} h={5} /></KanbanMenu>
            <HeaderButton $w={35} $h={30} aria-label="Add kanban"><AddKanbanIcon /></HeaderButton>
            <HeaderButton $w={35} $h={30} aria-label="Add column"><AddKanbanIcon column /></HeaderButton>
            <HeaderButton $w={35} $h={30} aria-label="Add ticket"><TicketIcon /></HeaderButton>
          </KanbanTools>
          <Filters onSubmit={(e) => e.preventDefault()}>
            <Field>name :<NameInput /></Field>
            <Combo label="responsible" />
            <Combo label="status" />
            <Combo label="version" />
            <Combo label="sorted by" />
            <FilterButton type="button" aria-label="Filter"><FunnelIcon /><Caret /></FilterButton>
          </Filters>
          <Options>
            <Option>show work on elements<Check type="checkbox" defaultChecked /></Option>
            <Option>show closed items<Check type="checkbox" /></Option>
            <Option>show large elements<Check type="checkbox" /></Option>
          </Options>
        </KanbanHeader>
        <Board>
          {columns.map((c) => (
            <Column key={c.name}>
              <ColumnHead>
                <ColumnTitleRow>
                  <ColumnTitle>{c.name}</ColumnTitle>
                  {c.assigned && (
                    <>
                      <PlainButton $margin="1px 5px 0 0" aria-label="Delete column"><CrossIcon /></PlainButton>
                      <PlainButton $margin="1px 0 0" aria-label="Edit column"><PencilIcon /></PlainButton>
                    </>
                  )}
                  <Count>{c.count}</Count>
                </ColumnTitleRow>
                <Tables $single={!c.assigned}>
                  {c.assigned && <Load label="assigned" values={c.assigned} />}
                  <Load label="estimated" values={c.estimated} right={c.right} />
                </Tables>
              </ColumnHead>
              {c.card && <KanbanCard card={c.card} />}
            </Column>
          ))}
        </Board>
      </Kanban>
      <HorizontalScroll>
        <svg width="7" height="9" viewBox="0 0 7 9"><path d="M1 1l4 3.500L1 8" fill="none" stroke="#b5b5b5" strokeWidth="2" /></svg>
      </HorizontalScroll>
      <LoadMark />
      <LinkPreview>www.facebook.com/campaign/landing.php?&amp;campaign_id=1555709729&amp;extra_...RIsALfBZA5y6Muakqgk529YivvIUSOqucDWY0Dyia_n0zRaijzx_-ZeYfI6-AIaAkZ9EALw_wcB</LinkPreview>
    </Page>
  );
}
